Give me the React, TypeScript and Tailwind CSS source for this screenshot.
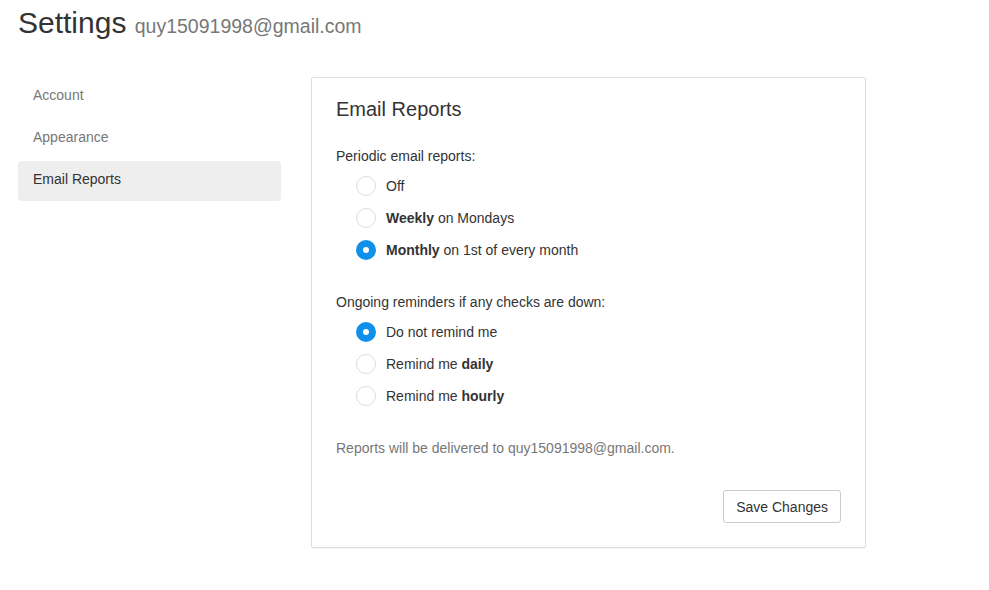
import React, { useState } from "react";

const font = { fontFamily: '"Liberation Sans", Arial, sans-serif' };

function Radio({ checked, onClick, children }: { checked: boolean; onClick: () => void; children: React.ReactNode }) {
    return (
        <label onClick={onClick} className="flex h-8 items-center pl-5 cursor-pointer">
            {checked ? (
                <span className="flex h-5 w-5 items-center justify-center rounded-full bg-[#0f90ea]">
                    <span className="h-[6px] w-[6px] rounded-full bg-white" />
                </span>
            ) : (
                <span className="h-5 w-5 rounded-full border border-[#dcdcdc] bg-white" />
            )}
            <span className="ml-[10px] text-[14px] leading-5 text-[#333]">{children}</span>
        </label>
    );
}

export default function App() {
    const [periodic, setPeriodic] = useState("monthly");
    const [remind, setRemind] = useState("none");
    const nav = ["Account", "Appearance", "Email Reports"];

    return (
        <div style={font} className="min-h-[590px] w-[989px] bg-white text-[#333]">
            {/* Header */}
            <h1 className="pl-[18px] pt-[6px] text-[30px] leading-[33px] font-normal text-[#333]">
                Settings <span className="text-[19.5px] text-[#777]">quy15091998@gmail.com</span>
            </h1>

            <div className="mt-[34px] flex pl-[18px]">
                {/* Sidebar */}
                <div className="flex w-[263px] flex-col gap-[2px]">
                    {nav.map((item) => (
                        <div
                            key={item}
                            className={
                                item === "Email Reports"
                                    ? "h-10 rounded-[4px] bg-[#eee] px-[15px] pt-[8px] text-[14px] leading-5 text-[#333]"
                                    : "h-10 rounded-[4px] px-[15px] pt-[8px] text-[14px] leading-5 text-[#777]"
                            }
                        >
                            {item}
                        </div>
                    ))}
                </div>

                {/* Panel */}
                <div className="ml-[30px] w-[555px] rounded-[2px] border border-[#ddd] px-6 pt-5 pb-6 shadow-[0_1px_1px_rgba(0,0,0,0.05)]">
                    <h2 className="text-[20px] leading-[22px] font-normal text-[#333]">Email Reports</h2>

                    <p className="mt-[26px] text-[14px] leading-5">Periodic email reports:</p>
                    <div className="mt-1">
                        <Radio checked={periodic === "off"} onClick={() => setPeriodic("off")}>Off</Radio>
                        <Radio checked={periodic === "weekly"} onClick={() => setPeriodic("weekly")}>
                            <b>Weekly</b> on Mondays
                        </Radio>
                        <Radio checked={periodic === "monthly"} onClick={() => setPeriodic("monthly")}>
                            <b>Monthly</b> on 1st of every month
                        </Radio>
                    </div>

                    <p className="mt-[26px] text-[14px] leading-5">Ongoing reminders if any checks are down:</p>
                    <div className="mt-1">
                        <Radio checked={remind === "none"} onClick={() => setRemind("none")}>Do not remind me</Radio>
                        <Radio checked={remind === "daily"} onClick={() => setRemind("daily")}>
                            Remind me <b>daily</b>
                        </Radio>
                        <Radio checked={remind === "hourly"} onClick={() => setRemind("hourly")}>
                            Remind me <b>hourly</b>
                        </Radio>
                    </div>

                    <p className="mt-[26px] text-[14px] leading-5 text-[#777]">
                        Reports will be delivered to quy15091998@gmail.com.
                    </p>

                    <div className="mt-8 flex justify-end">
                        <button className="h-[33px] rounded-[3px] border border-[#ccc] bg-white px-3 text-[14px] leading-5 text-[#333]">
                            Save Changes
                        </button>
                    </div>
                </div>
            </div>
        </div>
    );
}
